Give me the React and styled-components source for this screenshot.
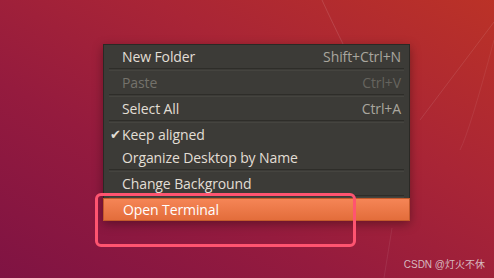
import React from "react";
import styled, { createGlobalStyle } from "styled-components";

const Global = createGlobalStyle`
  html, body { margin: 0; padding: 0; width: 494px; height: 278px; overflow: hidden; }
  body { font-family: "Open Sans", "Noto Sans", sans-serif; }
`;

const Desktop = styled.div`
  position: relative;
  width: 494px;
  height: 278px;
  box-sizing: border-box;
  padding: 44px 0 0 103px;
  background: linear-gradient(30deg, #7f1343 0%, #951b3e 35%, #a92536 65%, #bb3227 100%);
  overflow: hidden;
`;

const Lines = styled.svg`
  position: absolute;
  inset: 0;
  pointer-events: none;
`;

const Menu = styled.div`
  position: relative;
  width: 307px;
  box-sizing: border-box;
  background: #3c3b37;
  border: 1px solid #2a2925;
  border-bottom: none;
  box-shadow: 0 3px 10px rgba(0, 0, 0, 0.35);
  display: flex;
  flex-direction: column;
`;

const Item = styled.div`
  height: 23px;
  display: flex;
  align-items: center;
  justify-content: space-between;
  padding: 0 8px 0 18px;
  position: relative;
  font-size: 14px;
  letter-spacing: -0.1px;
  color: ${(p) => (p.$disabled ? "#74726b" : "#e2ded5")};
  ${(p) =>
    p.$active &&
    `
    margin: 0 -1px;
    padding-left: 19px;
    color: #ffffff;
    background: linear-gradient(#f58556, #e36d3b);
    border: 1px solid #c35a2c;
    box-sizing: border-box;
  `}
`;

const Shortcut = styled.span`
  color: ${(p) => (p.$disabled ? "#66645e" : "#a9a69e")};
`;

const Check = styled.span`
  position: absolute;
  left: 6px;
  top: 50%;
  transform: translateY(-52%);
  font-size: 12.5px;
  color: #e2ded5;
`;

const Separator = styled.div`
  height: 3px;
  box-sizing: border-box;
  margin: 0 5px;
  border-top: 1px solid #2e2d29;
  border-bottom: 1px solid #45443f;
`;

const Annotation = styled.div`
  position: absolute;
  left: 95px;
  top: 193px;
  width: 261px;
  height: 54px;
  box-sizing: border-box;
  border: 3px solid #ff5470;
  border-radius: 6px;
`;

const Watermark = styled.div`
  position: absolute;
  right: 9px;
  bottom: 7px;
  font-family: "Liberation Sans", "Noto Sans CJK SC", sans-serif;
  font-size: 10px;
  color: rgba(225, 215, 218, 0.85);
`;

export default function App() {
  return (
    <>
      <Global />
      <Desktop>
        <Lines width="494" height="278" viewBox="0 0 494 278">
          <path d="M322 0 Q332 22 346 50" stroke="rgba(255,255,255,0.12)" strokeWidth="1" fill="none" />
          <path d="M494 22 L420 120" stroke="rgba(255,255,255,0.1)" strokeWidth="1" fill="none" />
          <path d="M494 40 Q470 130 460 150" stroke="rgba(255,255,255,0.07)" strokeWidth="1" fill="none" />
          <path d="M392 228 L384 278" stroke="rgba(255,255,255,0.08)" strokeWidth="1" fill="none" />
        </Lines>
        <Menu>
          <Item>
            <span>New Folder</span>
            <Shortcut>Shift+Ctrl+N</Shortcut>
          </Item>
          <Separator />
          <Item $disabled>
            <span>Paste</span>
            <Shortcut $disabled>Ctrl+V</Shortcut>
          </Item>
          <Separator />
          <Item>
            <span>Select All</span>
            <Shortcut>Ctrl+A</Shortcut>
          </Item>
          <Separator />
          <Item>
            <Check>✔</Check>
            <span>Keep aligned</span>
          </Item>
          <Item>
            <span>Organize Desktop by Name</span>
          </Item>
          <Separator />
          <Item>
            <span>Change Background</span>
          </Item>
          <Separator />
          <Item $active>
            <span>Open Terminal</span>
          </Item>
        </Menu>
        <Annotation />
        <Watermark>CSDN @灯火不休</Watermark>
      </Desktop>
    </>
  );
}
